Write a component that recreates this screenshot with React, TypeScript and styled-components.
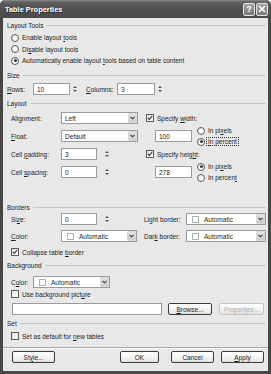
import React from "react";
import styled, { createGlobalStyle } from "styled-components";

const Global = createGlobalStyle`
  html, body { margin: 0; padding: 0; background: #ffffff; }
  body { font-family: "Liberation Sans", Arial, sans-serif; }
  #root { width: 271px; height: 374px; }
  * { box-sizing: border-box; }
`;

const Window = styled.div`
  width: 271px;
  height: 374px;
  display: flex;
  flex-direction: column;
  background: #474747;
  border-radius: 5px 5px 0 0;
  overflow: hidden;
  font-size: 6.5px;
  color: #1c1c1c;
`;

const TitleBar = styled.div`
  height: 18px;
  flex: none;
  display: flex;
  align-items: center;
  padding: 0 3px 0 5px;
  background: linear-gradient(#8a8a8a 0px, #626262 2px, #555555 6px, #4f4f4f 12px, #4a4a4a 18px);
`;

const Title = styled.div`
  flex: 1;
  color: #ffffff;
  font-weight: bold;
  font-size: 7.4px;
  text-shadow: 1px 1px 0 #2e2e2e;
  padding-top: 1px;
`;

const CapButton = styled.div`
  width: 12px;
  height: 13px;
  margin-left: 1px;
  border: 1px solid #e6e6e6;
  border-radius: 2px;
  background: linear-gradient(#a2a2a2, #7a7a7a);
  display: flex;
  align-items: center;
  justify-content: center;
  color: #ffffff;
  font-weight: bold;
  font-size: 9px;
`;

const Frame = styled.div`
  flex: 1;
  display: flex;
  padding: 0 3px 3px 3px;
`;

const Body = styled.div`
  flex: 1;
  display: flex;
  flex-direction: column;
  background: #e8e8e8;
  padding: 2px 2px 0 4px;
`;

const Block = styled.div<{ $mt?: number; $indent?: number }>`
  margin-top: ${(p) => p.$mt ?? 0}px;
  padding-left: ${(p) => p.$indent ?? 0}px;
`;

const HeaderRow = styled.div<{ $mt?: number }>`
  height: 11px;
  margin-top: ${(p) => p.$mt ?? 0}px;
  display: flex;
  align-items: center;
  gap: 3px;
  color: #222;
  &::after {
    content: "";
    flex: 1;
    height: 1px;
    background: #c7c7c7;
  }
`;

const Row = styled.div<{ $h?: number; $gap?: number }>`
  height: ${(p) => p.$h ?? 12}px;
  display: flex;
  align-items: center;
  gap: ${(p) => p.$gap ?? 0}px;
`;

const Label = styled.span<{ $w?: number; $ml?: number }>`
  width: ${(p) => (p.$w ? `${p.$w}px` : "auto")};
  margin-left: ${(p) => p.$ml ?? 0}px;
  flex: none;
  white-space: nowrap;
`;

const TextBox = styled.div<{ $w: number }>`
  width: ${(p) => p.$w}px;
  height: 12px;
  flex: none;
  border: 1px solid #9a9a9a;
  background: #ffffff;
  display: flex;
  align-items: center;
  padding-left: 3px;
  white-space: nowrap;
`;

const SpinBox = styled.div`
  width: 6px;
  height: 12px;
  flex: none;
  margin-left: 2px;
  display: flex;
  align-items: center;
  justify-content: center;
`;

const SelectBox = styled.div<{ $w: number }>`
  width: ${(p) => p.$w}px;
  height: 12px;
  flex: none;
  border: 1px solid #9a9a9a;
  background: #ffffff;
  display: flex;
  align-items: center;
  padding-left: 3px;
  white-space: nowrap;
`;

const SelectText = styled.span`
  flex: 1;
  display: flex;
  align-items: center;
  gap: 5px;
`;

const ArrowBtn = styled.div`
  width: 9px;
  height: 10px;
  flex: none;
  border-radius: 1px;
  background: linear-gradient(#e2e2e2, #cdcdcd);
  border: 1px solid #d8d8d8;
  display: flex;
  align-items: center;
  justify-content: center;
`;

const Swatch = styled.span`
  width: 7px;
  height: 7px;
  flex: none;
  border: 1px solid #b0b0b0;
  background: #ffffff;
  margin-left: 2px;
`;

const RadioMark = styled.span<{ $on?: boolean }>`
  width: 8px;
  height: 8px;
  flex: none;
  border-radius: 50%;
  border: 1px solid #5c5c5c;
  background: radial-gradient(circle at 60% 60%, #ffffff 30%, #dcdcdc 100%);
  display: flex;
  align-items: center;
  justify-content: center;
  &::after {
    content: "";
    width: 3px;
    height: 3px;
    border-radius: 50%;
    background: ${(p) => (p.$on ? "#3a3a3a" : "transparent")};
  }
`;

const CheckMark = styled.span`
  width: 8px;
  height: 8px;
  flex: none;
  border: 1px solid #5a5a5a;
  background: linear-gradient(135deg, #e4e4e4, #ffffff);
  display: flex;
  align-items: center;
  justify-content: center;
`;

const Option = styled.div<{ $h?: number; $focus?: boolean }>`
  height: ${(p) => p.$h ?? 11}px;
  display: flex;
  align-items: center;
  gap: 2px;
  white-space: nowrap;
  & > span:last-child {
    padding: 0 1px;
    outline: ${(p) => (p.$focus ? "1px dotted #333" : "none")};
  }
`;

const LayoutGrid = styled.div`
  margin-top: 3.5px;
  padding-left: 4px;
  display: grid;
  grid-template-columns: 50px 77px 8px 120px;
  grid-template-rows: 12px 22px 12px 22px;
  row-gap: 1px;
  align-items: center;
`;

const BordersGrid = styled.div`
  margin-top: 0.5px;
  padding-left: 4px;
  display: grid;
  grid-template-columns: 50px 76px 7px 42px 80px;
  grid-template-rows: 12px 12px;
  row-gap: 5px;
  align-items: center;
`;

const Cell = styled.div<{ $col: number; $indent?: number }>`
  grid-column: ${(p) => p.$col};
  display: flex;
  align-items: center;
  gap: 5px;
  padding-left: ${(p) => p.$indent ?? 0}px;
  white-space: nowrap;
`;

const RadioStack = styled.div`
  display: flex;
  flex-direction: column;
`;

const Separator = styled.div`
  margin: 6px -2px 0 -4px;
  height: 2px;
  border-top: 1px solid #a8a8a8;
  border-bottom: 1px solid #fbfbfb;
`;

const Footer = styled.div`
  margin-top: 2px;
  height: 12px;
  display: flex;
  align-items: center;
  padding: 0 2px 0 5px;
`;

const PushButton = styled.div<{ $w: number; $disabled?: boolean; $ml?: number }>`
  width: ${(p) => p.$w}px;
  height: 12px;
  flex: none;
  margin-left: ${(p) => p.$ml ?? 0}px;
  border: 1px solid ${(p) => (p.$disabled ? "#c4c4c4" : "#3c3c3c")};
  border-radius: 2px;
  background: linear-gradient(#ffffff, #f1f1f1 60%, #e0e0e0);
  color: ${(p) => (p.$disabled ? "#acacac" : "#1c1c1c")};
  display: flex;
  align-items: center;
  justify-content: center;
  white-space: nowrap;
`;

const Spacer = styled.div`
  flex: 1;
`;

const Spinner = () => (
  <SpinBox>
    <svg width="6" height="12" viewBox="0 0 6 12">
      <path d="M1 5 L3 3 L5 5 Z" fill="#555" />
      <path d="M1 7 L3 9 L5 7 Z" fill="#555" />
    </svg>
  </SpinBox>
);

const Arrow = () => (
  <ArrowBtn>
    <svg width="5" height="4" viewBox="0 0 5 4">
      <path d="M0.5 0.8 L2.5 2.8 L4.5 0.8" stroke="#3a3a3a" strokeWidth="1.1" fill="none" />
    </svg>
  </ArrowBtn>
);

const Check = () => (
  <CheckMark>
    <svg width="6" height="6" viewBox="0 0 6 6">
      <path d="M0.8 2.8 L2.3 4.4 L5.2 1" stroke="#2e2e2e" strokeWidth="1.1" fill="none" />
    </svg>
  </CheckMark>
);

const Select = ({ w, text, swatch }: { w: number; text: React.ReactNode; swatch?: boolean }) => (
  <SelectBox $w={w}>
    <SelectText>
      {swatch && <Swatch />}
      <span>{text}</span>
    </SelectText>
    <Arrow />
  </SelectBox>
);

const Radio = ({ on, children, focus }: { on?: boolean; children: React.ReactNode; focus?: boolean }) => (
  <Option $focus={focus}>
    <RadioMark $on={on} />
    <span>{children}</span>
  </Option>
);

const CheckOption = ({ checked, children, h }: { checked?: boolean; children: React.ReactNode; h?: number }) => (
  <Option $h={h}>
    {checked ? <Check /> : <CheckMark />}
    <span>{children}</span>
  </Option>
);

export default function App() {
  return (
    <>
      <Global />
      <Window>
        <TitleBar>
          <Title>Table Properties</Title>
          <CapButton>?</CapButton>
          <CapButton>
            <svg width="8" height="8" viewBox="0 0 8 8">
              <path d="M1 1 L7 7 M7 1 L1 7" stroke="#fff" strokeWidth="1.6" />
            </svg>
          </CapButton>
        </TitleBar>
        <Frame>
          <Body>
            <HeaderRow>Layout Tools</HeaderRow>
            <Block $mt={1} $indent={4}>
              <Option $h={11.5}>
                <RadioMark />
                <span>Enable layout <u>t</u>ools</span>
              </Option>
              <Option $h={11.5}>
                <RadioMark />
                <span>Di<u>s</u>able layout tools</span>
              </Option>
              <Option $h={11.5}>
                <RadioMark $on />
                <span>Automatically enable layout <u>t</u>ools based on table content</span>
              </Option>
            </Block>

            <HeaderRow $mt={3}>Size</HeaderRow>
            <Block $mt={2.5}>
              <Row>
                <Label $w={26}>
                  <u>R</u>ows:
                </Label>
                <TextBox $w={37}>10</TextBox>
                <Spinner />
                <Label $w={31} $ml={8}>
                  <u>C</u>olumns:
                </Label>
                <TextBox $w={38}>3</TextBox>
                <Spinner />
              </Row>
            </Block>

            <HeaderRow $mt={2.5}>Layout</HeaderRow>
            <LayoutGrid>
              <Cell $col={1}>
                <Label>Ali<u>g</u>nment:</Label>
              </Cell>
              <Cell $col={2}>
                <Select w={77} text="Left" />
              </Cell>
              <Cell $col={4}>
                <CheckOption checked h={12}>
                  Specify <u>w</u>idth:
                </CheckOption>
              </Cell>

              <Cell $col={1}>
                <Label><u>F</u>loat:</Label>
              </Cell>
              <Cell $col={2}>
                <Select w={77} text="Default" />
              </Cell>
              <Cell $col={4} $indent={9}>
                <TextBox $w={37}>100</TextBox>
                <RadioStack>
                  <Radio>
                    In pi<u>x</u>els
                  </Radio>
                  <Radio on focus>
                    <u>I</u>n percent
                  </Radio>
                </RadioStack>
              </Cell>

              <Cell $col={1}>
                <Label>Cell <u>p</u>adding:</Label>
              </Cell>
              <Cell $col={2}>
                <TextBox $w={36}>3</TextBox>
                <Spinner />
              </Cell>
              <Cell $col={4}>
                <CheckOption checked h={12}>
                  Specify heig<u>h</u>t:
                </CheckOption>
              </Cell>

              <Cell $col={1}>
                <Label>Cell <u>s</u>pacing:</Label>
              </Cell>
              <Cell $col={2}>
                <TextBox $w={36}>0</TextBox>
                <Spinner />
              </Cell>
              <Cell $col={4} $indent={9}>
                <TextBox $w={37}>278</TextBox>
                <RadioStack>
                  <Radio on>
                    In pi<u>x</u>els
                  </Radio>
                  <Radio>
                    In percen<u>t</u>
                  </Radio>
                </RadioStack>
              </Cell>
            </LayoutGrid>

            <HeaderRow $mt={18.5}>Borders</HeaderRow>
            <BordersGrid>
              <Cell $col={1}>
                <Label>Si<u>z</u>e:</Label>
              </Cell>
              <Cell $col={2}>
                <TextBox $w={36}>0</TextBox>
                <Spinner />
              </Cell>
              <Cell $col={4}>
                <Label>Light border:</Label>
              </Cell>
              <Cell $col={5}>
                <Select w={80} swatch text="Automatic" />
              </Cell>

              <Cell $col={1}>
                <Label><u>C</u>olor:</Label>
              </Cell>
              <Cell $col={2}>
                <Select w={76} swatch text="Automatic" />
              </Cell>
              <Cell $col={4}>
                <Label>Dar<u>k</u> border:</Label>
              </Cell>
              <Cell $col={5}>
                <Select w={80} swatch text="Automatic" />
              </Cell>
            </BordersGrid>

            <Block $mt={5} $indent={4}>
              <CheckOption checked h={10}>
                Collapse table <u>b</u>order
              </CheckOption>
            </Block>

            <HeaderRow $mt={2.5}>Background</HeaderRow>
            <Block $mt={5.5} $indent={4}>
              <Row>
                <Label $w={22}>
                  C<u>o</u>lor:
                </Label>
                <Select w={77} swatch text="Automatic" />
              </Row>
            </Block>
            <Block $mt={1} $indent={4}>
              <CheckOption h={10}>
                Use background pict<u>u</u>re
              </CheckOption>
            </Block>
            <Block $mt={4} $indent={5}>
              <Row>
                <TextBox $w={150} />
                <PushButton $w={44} $ml={6}>
                  <span>
                    <u>B</u>rowse...
                  </span>
                </PushButton>
                <PushButton $w={45} $ml={7} $disabled>
                  <span>
                    Propert<u>i</u>es...
                  </span>
                </PushButton>
              </Row>
            </Block>

            <HeaderRow $mt={2.5}>Set</HeaderRow>
            <Block $mt={2.5} $indent={4}>
              <CheckOption h={10}>
                Set as default for <u>n</u>ew tables
              </CheckOption>
            </Block>

            <Separator />

            <Footer>
              <PushButton $w={43}>
                <span>
                  St<u>y</u>le...
                </span>
              </PushButton>
              <Spacer />
              <PushButton $w={39}>OK</PushButton>
              <PushButton $w={43} $ml={12}>
                Cancel
              </PushButton>
              <PushButton $w={43} $ml={7}>
                <span>
                  <u>A</u>pply
                </span>
              </PushButton>
            </Footer>
          </Body>
        </Frame>
      </Window>
    </>
  );
}
